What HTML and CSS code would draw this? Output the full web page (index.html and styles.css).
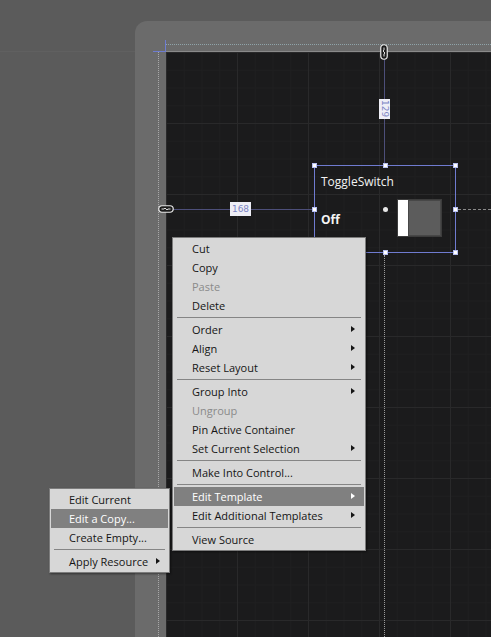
FILE: index.html
```html
<!DOCTYPE html>
<html>
<head>
<meta charset="utf-8">
<link rel="stylesheet" href="styles.css">
</head>
<body>
<div class="stage">
  <div class="frame">
    <div class="guide-top"></div>
    <div class="guide-left"></div>
    <div class="cross-h"></div>
    <div class="cross-v"></div>
    <div class="artboard">
      <div class="measure-v"></div>
      <div class="measure-h"></div>
      <svg class="link link-v" width="8" height="16" viewBox="0 0 8 16">
        <rect x="0.75" y="0.75" width="6.5" height="14.5" rx="3.2" fill="#1b1b1b" stroke="#e8e8e8" stroke-width="1.2"/>
        <path d="M4 3.5 V6 Q2.2 7 4 8 Q5.8 9 4 10 V12.5" fill="none" stroke="#e8e8e8" stroke-width="1"/>
      </svg>
      <svg class="link link-h" width="16" height="8" viewBox="0 0 16 8">
        <rect x="0.75" y="0.75" width="14.5" height="6.5" rx="3.2" fill="#1b1b1b" stroke="#e8e8e8" stroke-width="1.2"/>
        <path d="M3.5 4 H6 Q7 2.2 8 4 Q9 5.8 10 4 H12.5" fill="none" stroke="#e8e8e8" stroke-width="1"/>
      </svg>
      <div class="label label-v">129</div>
      <div class="label label-h">168</div>
      <div class="dash-right"></div>
      <div class="dot-down"></div>
      <div class="selection">
        <div class="ts-title">ToggleSwitch</div>
        <div class="ts-row">
          <span class="ts-off">Off</span>
          <span class="ts-switch"><span class="ts-knob"></span><span class="ts-track"></span></span>
        </div>
        <span class="handle h-tl"></span>
        <span class="handle h-tm"></span>
        <span class="handle h-tr"></span>
        <span class="handle h-ml"></span>
        <span class="handle h-mr"></span>
        <span class="handle h-bl"></span>
        <span class="handle h-bm"></span>
        <span class="handle h-br"></span>
        <span class="center-dot"></span>
      </div>
    </div>
  </div>

  <div class="menu main-menu">
    <div class="item">Cut</div>
    <div class="item">Copy</div>
    <div class="item disabled">Paste</div>
    <div class="item">Delete</div>
    <div class="sep"></div>
    <div class="item sub">Order</div>
    <div class="item sub">Align</div>
    <div class="item sub">Reset Layout</div>
    <div class="sep"></div>
    <div class="item sub">Group Into</div>
    <div class="item disabled">Ungroup</div>
    <div class="item">Pin Active Container</div>
    <div class="item sub">Set Current Selection</div>
    <div class="sep"></div>
    <div class="item">Make Into Control...</div>
    <div class="sep"></div>
    <div class="item sub active">Edit Template</div>
    <div class="item sub">Edit Additional Templates</div>
    <div class="sep"></div>
    <div class="item">View Source</div>
  </div>

  <div class="menu sub-menu">
    <div class="item">Edit Current</div>
    <div class="item active">Edit a Copy...</div>
    <div class="item">Create Empty...</div>
    <div class="sep"></div>
    <div class="item sub">Apply Resource</div>
  </div>
</div>
</body>
</html>
```

FILE: styles.css
```css
html, body {
  margin: 0;
  padding: 0;
}
body {
  width: 491px;
  height: 637px;
  overflow: hidden;
  background: #5b5b5b;
  font-family: "Open Sans", "Noto Sans", sans-serif;
}
.stage {
  position: relative;
  width: 491px;
  height: 637px;
  box-sizing: border-box;
  padding: 21px 0 0 135px;
  background: linear-gradient(to bottom, transparent 51px, #606060 51px, #606060 52px, transparent 52px), #5b5b5b;
}
.frame {
  position: relative;
  height: 100%;
  box-sizing: border-box;
  padding: 31px 0 0 31px;
  background: #6b6b6b;
  border-radius: 12px 0 0 0;
}
.guide-top {
  position: absolute;
  left: 30px;
  right: 0;
  top: 23px;
  border-top: 1px dotted #8fa3a8;
}
.guide-left {
  position: absolute;
  left: 23px;
  top: 31px;
  bottom: 0;
  border-left: 1px dotted #a8a8a8;
}
.cross-h {
  position: absolute;
  left: 18px;
  top: 30px;
  width: 13px;
  height: 1px;
  background: #6d7cd0;
}
.cross-v {
  position: absolute;
  left: 30px;
  top: 19px;
  width: 1px;
  height: 12px;
  background: #6d7cd0;
}
.artboard {
  position: relative;
  height: 100%;
  background-color: #1b1b1c;
  background-image:
    linear-gradient(to right, #29292a 1px, transparent 1px),
    linear-gradient(to bottom, #29292a 1px, transparent 1px),
    linear-gradient(to right, #1f1f20 1px, transparent 1px),
    linear-gradient(to bottom, #1f1f20 1px, transparent 1px);
  background-size: 71px 71px, 71px 71px, 17.75px 17.75px, 17.75px 17.75px;
  box-shadow: 0 -1px 0 #8a8a8a;
}
.measure-v {
  position: absolute;
  left: 218px;
  top: 0;
  width: 1px;
  height: 113px;
  background: #4d4f7a;
}
.measure-h {
  position: absolute;
  left: 0;
  top: 157px;
  width: 148px;
  height: 1px;
  background: #4d4f7a;
}
.link {
  position: absolute;
  display: block;
}
.link-v {
  left: 214px;
  top: -8px;
}
.link-h {
  left: -8px;
  top: 153px;
}
.label {
  position: absolute;
  background: #eeeef6;
  color: #7c84c4;
  font-family: "DejaVu Sans", sans-serif;
  font-size: 9px;
  line-height: 1;
  display: flex;
  align-items: center;
  justify-content: center;
}
.label-v {
  left: 213px;
  top: 47px;
  width: 11px;
  height: 20px;
  writing-mode: vertical-rl;
}
.label-h {
  left: 64px;
  top: 150px;
  width: 21px;
  height: 14px;
}
.dash-right {
  position: absolute;
  left: 292px;
  right: 0;
  top: 157px;
  border-top: 1px dashed #8a8a8a;
}
.dot-down {
  position: absolute;
  left: 218px;
  top: 203px;
  bottom: 0;
  border-left: 1px dotted #9a9a9a;
}
.selection {
  position: absolute;
  left: 148px;
  top: 113px;
  width: 140px;
  height: 86px;
  border: 1px solid #6f7bd0;
  box-sizing: content-box;
  padding: 0;
}
.ts-title {
  color: #f2f2f2;
  font-size: 12px;
  line-height: 16px;
  margin: 8px 0 0 6px;
}
.ts-row {
  display: flex;
  align-items: center;
  margin: 9px 0 0 6px;
}
.ts-off {
  color: #f4f4f4;
  font-size: 12px;
  font-weight: 700;
  width: 76px;
  margin-top: 2px;
}
.ts-switch {
  display: flex;
  width: 45px;
  height: 38px;
  box-sizing: border-box;
  border: 1px solid #3c3c3c;
}
.ts-knob {
  width: 10px;
  background: #ffffff;
}
.ts-track {
  flex: 1;
  background: #5c5c5c;
  border: 1px solid #474747;
}
.handle {
  position: absolute;
  width: 5px;
  height: 5px;
  box-sizing: border-box;
  background: #ffffff;
  border: 1px solid #b8c0f0;
}
.h-tl { left: -3px; top: -3px; }
.h-tm { left: 68px; top: -3px; }
.h-tr { left: 138px; top: -3px; }
.h-ml { left: -3px; top: 41px; }
.h-mr { left: 138px; top: 41px; }
.h-bl { left: -3px; top: 84px; }
.h-bm { left: 68px; top: 84px; }
.h-br { left: 138px; top: 84px; }
.center-dot {
  position: absolute;
  left: 68px;
  top: 41px;
  width: 5px;
  height: 5px;
  border-radius: 50%;
  background: #e8e8e8;
}
.menu {
  position: absolute;
  background: #d7d7d7;
  border: 1px solid #7c7c7c;
  padding: 1px 1px;
  box-shadow: 1px 1px 2px rgba(0, 0, 0, 0.45);
  color: #151515;
  font-size: 11px;
}
.main-menu {
  left: 172px;
  top: 237px;
  width: 190px;
}
.sub-menu {
  left: 49px;
  top: 488px;
  width: 117px;
}
.item {
  position: relative;
  height: 19px;
  line-height: 19px;
  padding-left: 18px;
  white-space: nowrap;
}
.item.disabled {
  color: #8a8a8a;
}
.item.active {
  background: #808080;
  color: #ffffff;
}
.item.sub::after {
  content: "";
  position: absolute;
  right: 9px;
  top: 6px;
  border-left: 4px solid #151515;
  border-top: 3.5px solid transparent;
  border-bottom: 3.5px solid transparent;
}
.sub-menu .item.sub::after {
  right: 8px;
}
.item.active.sub::after {
  border-left-color: #ffffff;
}
.sep {
  height: 1px;
  margin: 2px 3px;
  background: #858585;
}
```
